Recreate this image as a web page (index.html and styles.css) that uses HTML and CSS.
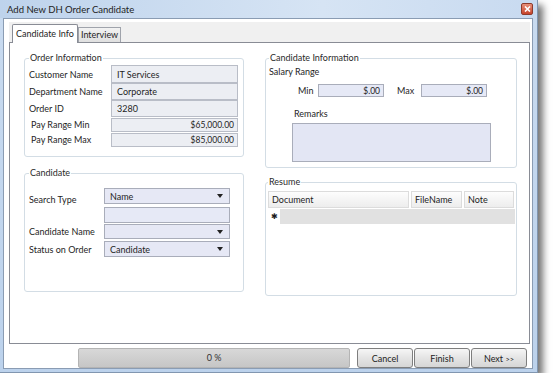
FILE: index.html
```html
<!DOCTYPE html>
<html lang="en">
<head>
  <meta charset="UTF-8">
  <title>Add New DH Order Candidate</title>
  <link rel="stylesheet" href="styles.css">
</head>
<body>
  <div class="window">
    <div class="titlebar">
      <span class="title">Add New DH Order Candidate</span>
      <span class="close">
        <svg width="7" height="6" viewBox="0 0 7 6"><path d="M1 0.5 L6 5.5 M6 0.5 L1 5.5" stroke="#fff" stroke-width="1.6"/></svg>
      </span>
    </div>
    <div class="client">
      <div class="tabs">
        <div class="tab-strip">
          <div class="tab active">Candidate Info</div>
          <div class="tab">Interview</div>
        </div>
        <div class="tab-page">
          <div class="col col-left">
            <fieldset class="group order-info">
              <legend>Order Information</legend>
              <div class="form-grid">
                <label>Customer Name</label><div class="field">IT Services</div>
                <label>Department Name</label><div class="field">Corporate</div>
                <label>Order ID</label><div class="field">3280</div>
                <label class="small-label">Pay Range Min</label><div class="field money">$65,000.00</div>
                <label class="small-label">Pay Range Max</label><div class="field money">$85,000.00</div>
              </div>
            </fieldset>
            <fieldset class="group candidate">
              <legend>Candidate</legend>
              <div class="cand-grid">
                <label class="low">Search Type</label>
                <div class="combo">Name<span class="arrow"></span></div>
                <span></span>
                <div class="field lav"></div>
                <label>Candidate Name</label>
                <div class="combo short"><span class="arrow"></span></div>
                <label>Status on Order</label>
                <div class="combo">Candidate<span class="arrow"></span></div>
              </div>
            </fieldset>
          </div>
          <div class="col col-right">
            <fieldset class="group cand-info">
              <legend>Candidate Information</legend>
              <div class="salary-title">Salary Range</div>
              <div class="salary-row">
                <span class="min-label">Min</span>
                <div class="field lav money">$.00</div>
                <span class="max-label">Max</span>
                <div class="field lav money">$.00</div>
              </div>
              <div class="remarks-label">Remarks</div>
              <div class="remarks"></div>
            </fieldset>
            <fieldset class="group resume">
              <legend>Resume</legend>
              <div class="grid-head">
                <div class="hcell doc">Document</div>
                <div class="hcell fname">FileName</div>
                <div class="hcell note">Note</div>
              </div>
              <div class="grid-row">
                <div class="row-head">&#10033;</div>
              </div>
            </fieldset>
          </div>
        </div>
      </div>
      <div class="footer">
        <div class="progress">0 %</div>
        <div class="buttons">
          <button class="btn">Cancel</button>
          <button class="btn">Finish</button>
          <button class="btn">Next <small>&gt;&gt;</small></button>
        </div>
      </div>
    </div>
  </div>
</body>
</html>
```

FILE: styles.css
```css
body {
  margin: 0;
  background: #fff;
  font-family: Lato, "Liberation Sans", sans-serif;
  font-size: 9px;
  color: #1e1e1e;
}
.window {
  width: 538px;
  height: 373px;
  box-sizing: border-box;
  border: 1px solid #8196b0;
  border-top: none;
  border-left: none;
  background: linear-gradient(#c9dbf0, #bcd2ec);
  box-shadow: 5px 5px 7px rgba(0, 0, 0, 0.55);
  display: flex;
  flex-direction: column;
}
.titlebar {
  height: 18px;
  display: flex;
  align-items: center;
  justify-content: space-between;
  padding: 0 4px 0 7px;
  background: linear-gradient(90deg, #bed3ec, #d6e4f4 60%, #c8daf0);
}
.title {
  font-size: 9.5px;
  color: #222;
}
.close {
  width: 10px;
  height: 10px;
  margin-top: -1px;
  display: flex;
  align-items: center;
  justify-content: center;
  background: linear-gradient(#e8907a, #c7432b);
  border: 1px solid #8d3a2c;
  border-radius: 2px;
}
.client {
  flex: 1;
  margin: 0 4px 3px 3px;
  border: 1px solid #8a9cb3;
  background: #fff;
  padding: 3px 2px 0 5px;
  display: flex;
  flex-direction: column;
}
.tabs {
  height: 322px;
  display: flex;
  flex-direction: column;
}
.tab-strip {
  height: 20px;
  background: #f0f0f0;
  display: flex;
  align-items: flex-end;
  padding-left: 3px;
}
.tab {
  height: 14px;
  line-height: 14px;
  padding: 0 2px;
  border: 1px solid #9fa3ab;
  border-bottom: none;
  background: linear-gradient(#f2f2f2, #e0e0e0);
  color: #1e1e1e;
}
.tab.active {
  height: 18px;
  line-height: 18px;
  padding: 0 3px;
  background: #fff;
  border-color: #898c95;
  border-radius: 2px 2px 0 0;
  margin-bottom: -1px;
  position: relative;
  z-index: 1;
}
.tab-page {
  flex: 1;
  border: 1px solid #898c95;
  background: #fff;
  display: flex;
  gap: 21px;
  padding: 9px 0 0 14px;
}
.col {
  display: flex;
  flex-direction: column;
}
.col-left {
  width: 220px;
  gap: 10px;
}
.col-right {
  width: 252px;
  gap: 8px;
}
.group {
  margin: 0;
  padding: 0 4px;
  border: 1px solid #d3dde5;
  border-radius: 3px;
  box-sizing: border-box;
  min-width: 0;
}
.group legend {
  padding: 0 1px;
  line-height: 12px;
  color: #2a2a2a;
}
.order-info { height: 105px; }
.candidate { height: 125px; }
.cand-info { height: 116px; padding-left: 3px; }
.resume { height: 120px; padding: 0 1px 0 2px; }

.field {
  box-sizing: border-box;
  border: 1px solid #b9bdc7;
  background: #eceef3;
  padding: 0 5px;
  display: flex;
  align-items: center;
}
.field.money {
  justify-content: flex-end;
  font-size: 8.5px;
  padding: 0 3px;
}
.field.lav {
  background: #e6e9f6;
  border-color: #a9adba;
}
.form-grid {
  margin-top: 1px;
  display: grid;
  grid-template-columns: 82px 127px;
  grid-template-rows: 18px 17px 17px 15px 15px;
  row-gap: 0;
  align-items: center;
}
.form-grid .field {
  height: 100%;
}
.form-grid .field.money {
  height: 14px;
}
.small-label {
  padding-left: 2px;
}
.cand-grid {
  margin-top: 9px;
  display: grid;
  grid-template-columns: 75px 126px;
  grid-template-rows: 16px 16px 15px 16px;
  row-gap: 2px;
  align-items: center;
}
.cand-grid .field {
  height: 16px;
  margin-top: 1px;
}
.low {
  align-self: end;
  margin-bottom: -1px;
}
.combo {
  box-sizing: border-box;
  height: 100%;
  border: 1px solid #a9adba;
  background: #e6e8f5;
  padding: 0 5px;
  display: flex;
  align-items: center;
  justify-content: space-between;
}
.combo.short {
  justify-content: flex-end;
}
.arrow {
  width: 0;
  height: 0;
  margin-right: 1px;
  border-left: 3px solid transparent;
  border-right: 3px solid transparent;
  border-top: 4px solid #222;
}
.salary-title {
  margin-top: 2px;
  line-height: 12px;
}
.salary-row {
  margin-top: 6px;
  height: 13px;
  display: flex;
  align-items: center;
  padding-left: 29px;
}
.salary-row .field {
  width: 66px;
  height: 13px;
}
.min-label { width: 20px; }
.max-label { width: 24px; margin-left: 13px; }
.remarks-label {
  margin: 11px 0 0 25px;
  line-height: 12px;
}
.remarks {
  margin: 3px 0 0 23px;
  width: 199px;
  height: 39px;
  box-sizing: border-box;
  border: 1px solid #a9adba;
  background: #e3e6f4;
}
.grid-head {
  margin-top: 3px;
  height: 17px;
  display: flex;
  gap: 2px;
}
.hcell {
  box-sizing: border-box;
  height: 17px;
  line-height: 15px;
  padding: 0 3px;
  border: 1px solid #dcdcdc;
  background: linear-gradient(#fdfdfd, #ededed);
}
.doc { width: 141px; }
.fname { width: 51px; }
.note { width: 50px; }
.grid-row {
  margin-top: 1px;
  height: 15px;
  width: 247px;
  background: #e1e1e1;
}
.row-head {
  width: 12px;
  height: 15px;
  background: #fff;
  font-size: 8px;
  line-height: 15px;
  text-align: center;
}
.footer {
  margin-top: 4px;
  height: 20px;
  display: flex;
  justify-content: flex-end;
  gap: 7px;
  padding-right: 3px;
}
.progress {
  width: 272px;
  box-sizing: border-box;
  border: 1px solid #b4b4b4;
  border-radius: 2px;
  background: linear-gradient(#d8d8d8, #c6c6c6);
  text-align: center;
  line-height: 18px;
  font-size: 9px;
  color: #333;
}
.buttons {
  display: flex;
  gap: 1px;
}
.btn {
  width: 56px;
  height: 20px;
  margin: 0;
  padding: 0;
  border: 1px solid #7e7e7e;
  border-radius: 3px;
  background: linear-gradient(#f6f6f6, #e4e4e4 50%, #d6d6d6);
  font-family: inherit;
  font-size: 9px;
  color: #222;
}
.btn small {
  font-size: 7.5px;
}
```
